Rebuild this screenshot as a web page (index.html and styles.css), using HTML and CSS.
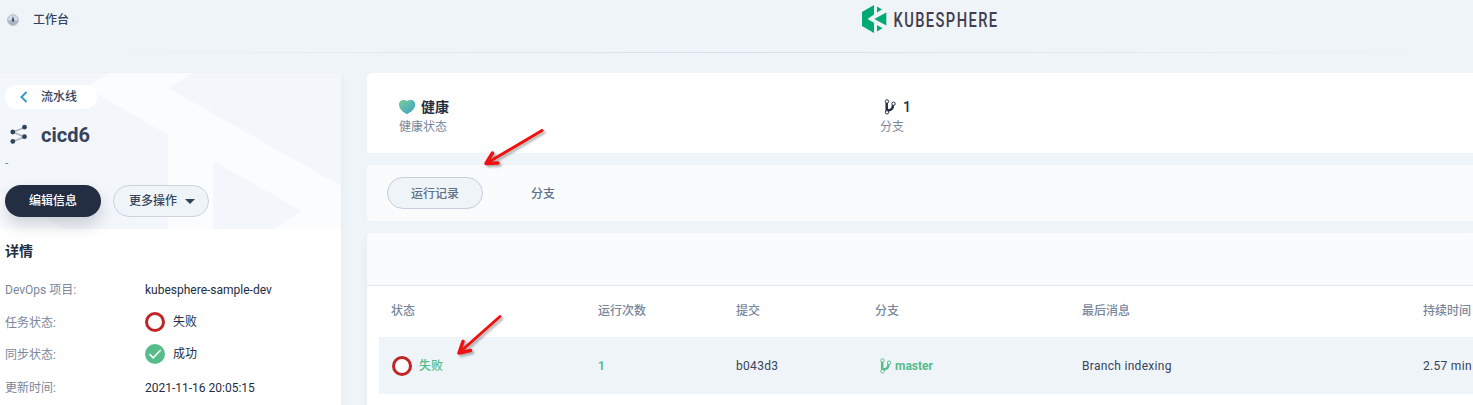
FILE: index.html
```html
<!DOCTYPE html>
<html lang="zh-CN">
<head>
<meta charset="utf-8">
<title>cicd6</title>
<link rel="stylesheet" href="styles.css">
</head>
<body>
<svg width="0" height="0" class="defs">
  <symbol id="branch" viewBox="0 0 12 16">
    <path d="M2.700 4v8M3 11.500c4.500 0 6-1.500 6-5.500" fill="none" stroke="currentColor" stroke-width="2.500"/>
    <circle cx="3" cy="2.500" r="1.700" fill="#fff" stroke="currentColor"/>
    <circle cx="3" cy="13.300" r="1.700" fill="#fff" stroke="currentColor"/>
    <circle cx="9.500" cy="4.700" r="1.700" fill="#fff" stroke="currentColor"/>
  </symbol>
</svg>
<header class="top">
  <a class="workbench">
    <svg width="12" height="12" viewBox="0 0 12 12"><circle cx="6" cy="6" r="5.400" fill="#d5dce6" stroke="#b3bdcb"/><path d="M1 6.500h10a5 5 0 0 1-10 0z" fill="#a9b4c5"/><path d="M6 2.300 7.300 6.500 6 8 4.700 6.500z" fill="#3a4865"/></svg>
    <span>工作台</span>
  </a>
  <svg class="logo" width="150" height="36" viewBox="0 0 150 36">
    <path fill="#00aa72" d="M12 0v9.500L5.500 14 12 17.800V28L0 21V7z"/>
    <path fill="#00aa72" d="M15 1.500 20 4.500 15 7.500zM24.300 7.500V20.500L12.300 14zM15 20 20.500 23.200 15 26.500z"/>
    <text x="31.500" y="22" textLength="105" lengthAdjust="spacingAndGlyphs">KUBESPHERE</text>
  </svg>
</header>
<main class="layout">
  <aside class="side">
    <section class="banner">
      <svg class="watermark" width="341" height="156" viewBox="0 0 341 156"><path fill="#fafcfe" fill-rule="evenodd" d="M86 14 110 0H192L168 15 341 113V156H168V62zM213 88V156H273L302 138zM0 120 65 156H0z"/></svg>
      <a class="back"><svg width="8" height="12" viewBox="0 0 8 12"><path d="M6.500 1 1.500 6l5 5" fill="none" stroke="#369ac4" stroke-width="2"/></svg><span>流水线</span></a>
      <div class="title">
        <svg width="20" height="20" viewBox="0 0 20 20"><path d="M15.500 3.500 4 8l11.500 5L4 17.500" fill="none" stroke="#abb4be" stroke-width="1.500"/><g fill="#324558"><circle cx="15.500" cy="3.200" r="2.400"/><circle cx="3.800" cy="8" r="2.400"/><circle cx="15.500" cy="12.700" r="2.400"/><circle cx="3.800" cy="17.400" r="2.400"/></g></svg>
        <h1>cicd6</h1>
      </div>
      <p class="desc">-</p>
      <div class="actions"><button class="btn dark">编辑信息</button><button class="btn light">更多操作<i class="caret"></i></button></div>
    </section>
    <section class="details">
      <h2>详情</h2>
      <dl>
        <dt>DevOps 项目:</dt><dd class="latin">kubesphere-sample-dev</dd>
        <dt>任务状态:</dt><dd><i class="ring"></i>失败</dd>
        <dt>同步状态:</dt><dd><svg width="20" height="20" viewBox="0 0 20 20"><circle cx="10" cy="10" r="10" fill="#55bc8a"/><path d="m4.500 10 3.700 3.800L15.700 6" fill="none" stroke="#fff" stroke-width="1.500"/></svg>成功</dd>
        <dt>更新时间:</dt><dd class="latin">2021-11-16 20:05:15</dd>
      </dl>
    </section>
  </aside>
  <div class="content">
    <section class="stats">
      <div class="stat">
        <div class="value"><svg width="16" height="16" viewBox="0 0 16 16"><defs><linearGradient id="h" x1="0" y1="0" x2=".7" y2="1"><stop offset="0" stop-color="#7acb98"/><stop offset="1" stop-color="#43aabf"/></linearGradient></defs><path fill="url(#h)" d="M8 15.300C4.500 13.500 0 10.500 0 5.600 0 .7 5.500 0 8 2 10.500 0 16 .7 16 5.600c0 4.900-4.500 7.900-8 9.700z"/><path fill="#329dce" opacity=".5" d="M11 1c3-.3 5 1.500 5 4.600 0 1.500-.5 2.900-1.300 4.200C15 6 14 3 11 1z"/></svg><strong>健康</strong></div>
        <p>健康状态</p>
      </div>
      <div class="stat second">
        <div class="value"><svg width="14" height="16"><use href="#branch"/></svg><strong>1</strong></div>
        <p>分支</p>
      </div>
    </section>
    <nav class="tabs"><a class="tab active">运行记录</a><a class="tab">分支</a></nav>
    <section class="table">
      <div class="toolbar"></div>
      <div class="row head"><span>状态</span><span>运行次数</span><span>提交</span><span>分支</span><span>最后消息</span><span>持续时间</span></div>
      <div class="row record"><span class="fail"><i class="ring"></i>失败</span><b>1</b><span>b043d3</span><b class="branch"><svg width="13" height="16"><use href="#branch"/></svg>master</b><span>Branch indexing</span><span>2.57 min</span></div>
    </section>
  </div>
</main>
<svg class="arrows" width="1473" height="405" viewBox="0 0 1473 405">
  <g fill="none" stroke="#ee1111" stroke-linecap="round" stroke-linejoin="round">
    <path stroke-width="3" d="M542 130.500 487 163"/><path stroke-width="3.500" d="M492.500 153 486 163.500 498 163"/>
    <path stroke-width="3" d="M500 316.500 460 352"/><path stroke-width="3.500" d="M463 341.500 459 353 470.500 350.500"/>
  </g>
</svg>
</body>
</html>
```
FILE: styles.css
```css
* { box-sizing: border-box; }
body { margin: 0; width: 1473px; height: 405px; overflow: hidden; position: relative; background: #eff4f9; color: #242e42; font: 12px/20px Roboto, "Noto Sans CJK SC", sans-serif; }
h1, h2, p, dl, dd { margin: 0; }
.defs { position: absolute; }
.top { height: 53px; display: flex; align-items: flex-start; border-bottom: 1px solid; border-image: linear-gradient(to right, #eff4f9 5%, #d8dee5 50%, #eff4f9) 1; }
.workbench { width: 862px; display: flex; align-items: center; gap: 14px; padding: 10px 0 0 7px; font-weight: 500; color: #36435c; }
.logo { margin-top: 5px; }
.logo text { font: 500 21px Roboto, sans-serif; letter-spacing: 2px; fill: #423e4e; }
.layout { display: flex; gap: 26px; margin-top: 20px; }
.side { width: 341px; height: 340px; flex: none; background: #fff; border-radius: 0 4px 0 0; overflow: hidden; box-shadow: 0 4px 8px rgba(36,46,66,.06); }
.banner { position: relative; height: 156px; padding: 12px 5px 0; background: #f3f6fb; }
.watermark { position: absolute; left: 0; top: 0; }
.back { position: relative; display: flex; align-items: center; width: 92px; height: 24px; padding-left: 15px; gap: 13px; border-radius: 12px; background: #fff; font-weight: 500; color: #36435c; }
.title { position: relative; display: flex; align-items: center; gap: 12px; height: 32px; margin-top: 10px; padding-left: 4px; }
.title h1 { font-size: 20px; line-height: 32px; font-weight: 700; color: #36435c; }
.title svg { margin-top: -2px; }
.desc { position: relative; height: 20px; margin-top: 2px; color: #79879c; }
.actions { position: relative; display: flex; gap: 12px; margin-top: 12px; }
.btn { width: 96px; height: 32px; padding: 0; border: 0; border-radius: 16px; font: 500 12px/20px Roboto, "Noto Sans CJK SC", sans-serif; }
.dark { background: #242e42; color: #fff; box-shadow: 0 8px 16px rgba(36,46,66,.2); }
.light { display: flex; align-items: center; justify-content: center; gap: 8px; padding-left: 2px; background: #eff4f9; border: 1px solid #ccd3db; color: #36435c; }
.caret { border: 5px solid transparent; border-top-color: #324558; border-bottom: 0; }
.details { padding: 12px 5px; }
.details h2 { font-size: 14px; line-height: 20px; font-weight: 700; }
dl { display: grid; grid-template-columns: 140px 1fr; grid-auto-rows: 32.6px; align-items: center; margin-top: 12px; }
dt { padding-top: 2px; color: #79879c; }
dd { display: flex; align-items: center; gap: 8px; }
.latin { padding-top: 1px; }
.ring { flex: none; width: 20px; height: 20px; border: 3px solid #c02525; border-radius: 50%; background: #fff; }
.content { flex: 1; min-width: 0; }
.stats { display: flex; height: 80px; padding: 24px 32px; background: #fff; border-radius: 5px 0 0 0; }
.stat { width: 481px; }
.value { display: flex; align-items: center; gap: 6px; height: 20px; }
.value strong { font-size: 14px; font-weight: 700; line-height: 20px; }
.second .value { padding-left: 3px; }
.second strong { font-weight: 500; }
.stat p { color: #79879c; }
.tabs { display: flex; height: 56px; margin-top: 12px; padding: 12px 20px; background: #f9fbfd; border-radius: 4px 0 0 4px; }
.tab { height: 32px; width: 96px; margin-right: 12px; line-height: 34px; text-align: center; color: #5f708a; font-weight: 500; }
.active { line-height: 32px; border: 1px solid #c6cddc; border-radius: 16px; background: #eff4f9; }
.table { height: 180px; margin-top: 12px; background: #fff; border-radius: 4px 0 0 0; box-shadow: 0 4px 8px rgba(36,46,66,.06); }
.toolbar { height: 53px; background: #f9fbfd; border-bottom: 1px solid #e5eaf0; border-radius: 4px 0 0 0; }
.row { display: grid; grid-template-columns: 207px 138px 139px 207px 341px 1fr; align-items: center; margin-left: 12px; padding-left: 12px; white-space: nowrap; }
.head { height: 51px; padding-bottom: 2px; color: #79879c; font-weight: 500; }
.record { height: 57px; background: #eff4f9; color: #36435c; letter-spacing: .3px; }
.fail { display: flex; align-items: center; gap: 7px; padding-left: 1px; letter-spacing: 0; font-weight: 500; color: #55bc8a; }
.record b { color: #55bc8a; font-weight: 700; letter-spacing: 0; }
.branch { display: flex; align-items: center; gap: 3px; padding-left: 4px; }
.arrows { position: absolute; left: 0; top: 0; pointer-events: none; filter: drop-shadow(2px 2px 1px rgba(0,0,0,.3)); }
```
